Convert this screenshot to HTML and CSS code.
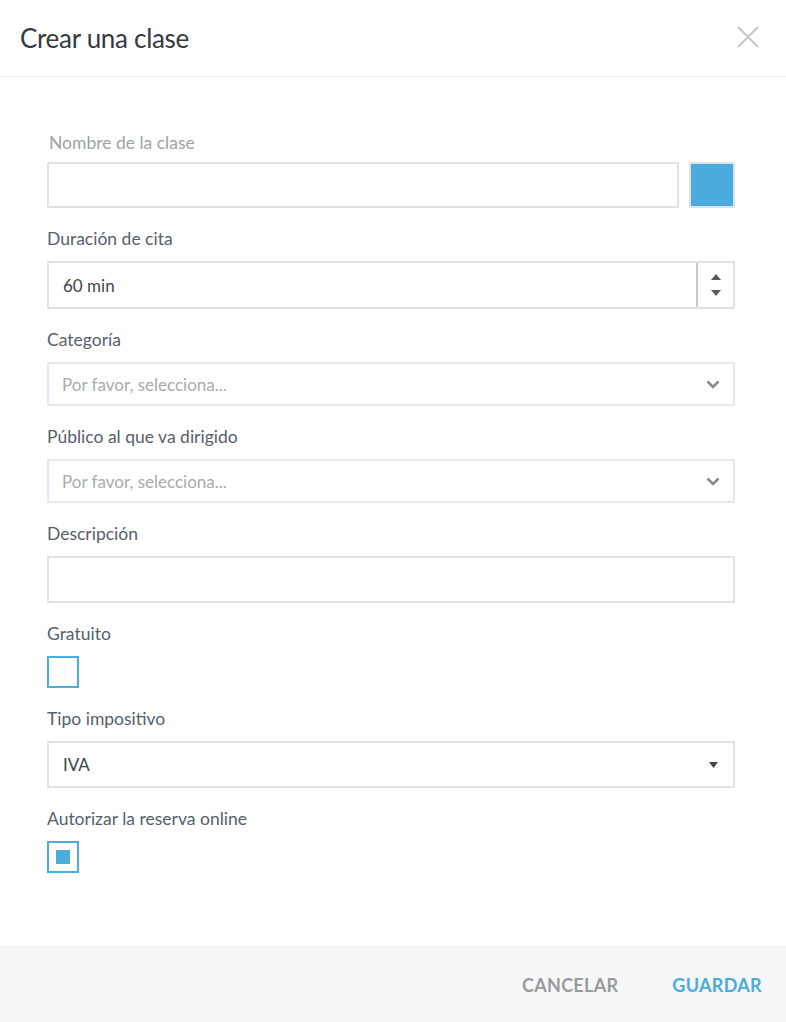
FILE: index.html
```html
<!DOCTYPE html>
<html lang="es">
<head>
<meta charset="utf-8">
<title>Crear una clase</title>
<link rel="stylesheet" href="styles.css">
</head>
<body>
<div class="modal">
  <header class="modal-header">
    <h1 class="modal-title">Crear una clase</h1>
    <button class="close" aria-label="Cerrar">
      <svg width="22" height="22" viewBox="0 0 22 22"><path d="M1 1 L21 21 M21 1 L1 21" stroke="#c9c9c9" stroke-width="2.2" fill="none"/></svg>
    </button>
  </header>
  <main class="modal-body">
    <div class="field field-first">
      <label class="label label-muted">Nombre de la clase</label>
      <div class="row">
        <div class="input grow"></div>
        <div class="swatch"><div class="swatch-fill"></div></div>
      </div>
    </div>
    <div class="field">
      <label class="label">Duración de cita</label>
      <div class="input number">
        <span class="value">60 min</span>
        <div class="spinner">
          <svg width="10" height="24" viewBox="0 0 10 24"><path d="M5 1 L10 7 L0 7 Z" fill="#5a5a5a"/><path d="M0 17 L10 17 L5 23 Z" fill="#5a5a5a"/></svg>
        </div>
      </div>
    </div>
    <div class="field">
      <label class="label">Categoría</label>
      <div class="select">
        <span class="placeholder">Por favor, selecciona...</span>
        <svg class="chev" width="14" height="9" viewBox="0 0 14 9"><path d="M1.5 1.5 L7 7 L12.5 1.5" stroke="#8a8a8a" stroke-width="2.6" fill="none"/></svg>
      </div>
    </div>
    <div class="field">
      <label class="label">Público al que va dirigido</label>
      <div class="select">
        <span class="placeholder">Por favor, selecciona...</span>
        <svg class="chev" width="14" height="9" viewBox="0 0 14 9"><path d="M1.5 1.5 L7 7 L12.5 1.5" stroke="#8a8a8a" stroke-width="2.6" fill="none"/></svg>
      </div>
    </div>
    <div class="field">
      <label class="label">Descripción</label>
      <div class="input"></div>
    </div>
    <div class="field">
      <label class="label">Gratuito</label>
      <div class="checkbox"></div>
    </div>
    <div class="field">
      <label class="label">Tipo impositivo</label>
      <div class="input native-select">
        <span class="value">IVA</span>
        <svg width="9" height="6" viewBox="0 0 9 6"><path d="M0 0 L9 0 L4.5 6 Z" fill="#444"/></svg>
      </div>
    </div>
    <div class="field">
      <label class="label">Autorizar la reserva online</label>
      <div class="checkbox checked"><div class="check-fill"></div></div>
    </div>
  </main>
  <footer class="modal-footer">
    <button class="btn btn-cancel">CANCELAR</button>
    <button class="btn btn-save">GUARDAR</button>
  </footer>
</div>
</body>
</html>
```
FILE: styles.css
```css
* { box-sizing: border-box; }
html, body { margin: 0; padding: 0; background: #fff; }
body { font-family: "Lato", "Open Sans", sans-serif; color: #56606a; }
.modal { width: 786px; height: 1022px; display: flex; flex-direction: column; }
.modal-header {
  height: 77px; border-bottom: 1px solid #eeeff1;
  display: flex; align-items: center; justify-content: space-between;
  padding: 0 27px 0 20px;
}
.modal-title { margin: 0; font-weight: 400; font-size: 26px; color: #333a41; letter-spacing: -0.3px; }
.close { border: 0; background: none; padding: 0; width: 22px; height: 22px; display: block; margin-top: -2px; }
.close svg { display: block; }
.modal-body { flex: 1; padding: 0 51px 0 47px; }
.field { margin-top: 20px; }
.field-first { margin-top: 55px; }
.label { display: block; font-size: 17.5px; line-height: 22px; margin-bottom: 11px; color: #56606a; }
.label-muted { color: #9da2a6; padding-left: 2px; margin-bottom: 8px; }
.row { display: flex; gap: 10px; }
.grow { flex: 1; }
.input { height: 47px; border: 2px solid #dfe3e6; background: #fff; }
.swatch { width: 46px; height: 46px; border: 2px solid #dfe3e6; }
.row .input { height: 46px; }
.swatch-fill { width: 100%; height: 100%; background: #4aabdc; }
.number { display: flex; align-items: center; height: 48px; }
.value { flex: 1; padding-left: 14px; font-size: 17px; color: #3d444b; }
.spinner { width: 37px; height: 100%; border-left: 2px solid #c8c8c8; display: flex; align-items: center; justify-content: center; }
.spinner svg { display: block; }
.select { height: 44px; border: 2px solid #e8e8e8; display: flex; align-items: center; padding: 0 13px 0 13px; }
.placeholder { flex: 1; font-size: 17px; color: #a9abad; }
.chev { display: block; }
.checkbox { width: 32px; height: 32px; border: 2px solid #4aaedd; display: flex; align-items: center; justify-content: center; }
.check-fill { width: 14px; height: 14px; background: #4aaedd; }
.native-select { height: 47px; display: flex; align-items: center; padding-right: 15px; }
.modal-footer {
  height: 76px; background: #f6f7f9; border-top: 1px solid #eeeff1;
  display: flex; align-items: center; justify-content: flex-end; gap: 54px; padding-right: 24px;
}
.btn { border: 0; background: none; padding: 0; font-family: inherit; font-weight: 700; font-size: 18px; letter-spacing: 0.3px; }
.btn-cancel { color: #9a9b9d; }
.btn-save { color: #4aabdc; }
```
